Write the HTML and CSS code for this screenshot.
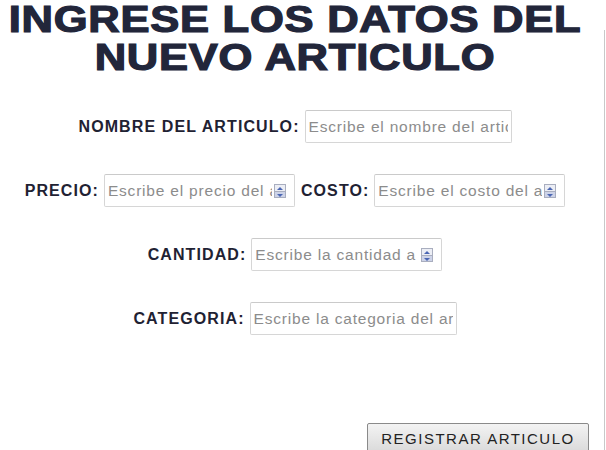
FILE: index.html
```html
<!DOCTYPE html>
<html lang="es">
<head>
<meta charset="utf-8">
<title>Nuevo articulo</title>
<link rel="stylesheet" href="styles.css">
</head>
<body>
<div class="screen">
<div class="page">
  <h1 class="title"><span class="title-line">INGRESE LOS DATOS DEL</span><span class="title-line">NUEVO ARTICULO</span></h1>
  <form class="form">
    <div class="row">
      <label class="label">NOMBRE DEL ARTICULO:</label>
      <span class="field field-text"><input class="input" type="text" placeholder="Escribe el nombre del articulo"></span>
    </div>
    <div class="row">
      <label class="label">PRECIO:</label>
      <span class="field field-num"><input class="input" type="text" placeholder="Escribe el precio del articulo"><span class="spin"><span class="spin-up"></span><span class="spin-down"></span></span></span>
      <label class="label">COSTO:</label>
      <span class="field field-num"><input class="input" type="text" placeholder="Escribe el costo del articulo"><span class="spin"><span class="spin-up"></span><span class="spin-down"></span></span></span>
    </div>
    <div class="row">
      <label class="label">CANTIDAD:</label>
      <span class="field field-num"><input class="input" type="text" placeholder="Escribe la cantidad a registrar"><span class="spin"><span class="spin-up"></span><span class="spin-down"></span></span></span>
    </div>
    <div class="row">
      <label class="label">CATEGORIA:</label>
      <span class="field field-text"><input class="input" type="text" placeholder="Escribe la categoria del articulo"></span>
    </div>
    <div class="actions">
      <button class="button" type="button">REGISTRAR ARTICULO</button>
    </div>
  </form>
</div>
</div>
</body>
</html>
```
FILE: styles.css
```css
html, body {
  margin: 0;
  padding: 0;
  background: #ffffff;
}
body {
  font-family: "Liberation Sans", Arial, sans-serif;
  color: #1f2233;
}
.screen {
  position: relative;
  width: 606px;
  height: 450px;
  overflow: hidden;
}
.screen::after {
  content: "";
  position: absolute;
  right: 1px;
  top: 30px;
  bottom: 0;
  width: 1px;
  background: #c8c8c8;
}
.page {
  width: 590px;
}
.title {
  margin: 0;
  padding-top: 1px;
  font-size: 36px;
  line-height: 38px;
  font-weight: bold;
  text-align: center;
  color: #22263a;
}
.title-line {
  display: block;
  transform: scaleX(1.21);
  letter-spacing: 0.6px;
  -webkit-text-stroke: 1.2px #22263a;
}
.form {
  display: flex;
  flex-direction: column;
  align-items: center;
  padding-top: 33px;
}
.row {
  display: flex;
  align-items: center;
  justify-content: center;
  gap: 6px;
  height: 33px;
  margin-bottom: 31px;
}
.label {
  font-size: 16px;
  font-weight: bold;
  letter-spacing: 1.1px;
  margin-right: -1.1px;
  color: #1f2233;
}
.field {
  position: relative;
  display: inline-block;
  height: 33px;
}
.field-text { width: 207px; }
.field-num { width: 191px; }
.input {
  box-sizing: border-box;
  width: 100%;
  height: 33px;
  border: 1px solid #d6d6d6;
  border-top-color: #cacaca;
  border-radius: 2px;
  padding: 0 3px;
  font-family: "Liberation Sans", Arial, sans-serif;
  font-size: 15.5px;
  letter-spacing: 0.8px;
  color: #333;
  background: #fff;
  outline: none;
}
.field-num .input { padding-right: 22px; }
.input::placeholder { color: #8c8c8c; }
.spin {
  position: absolute;
  right: 9px;
  top: 10px;
  width: 12px;
  height: 14px;
  display: flex;
  flex-direction: column;
  border: 1px solid #a9aebf;
  box-sizing: border-box;
}
.spin-up, .spin-down {
  flex: 1;
  position: relative;
}
.spin-up {
  background: #eceef5;
  border-bottom: 1px solid #a9aebf;
}
.spin-down { background: #cdd3e8; }
.spin-up::after, .spin-down::after {
  content: "";
  position: absolute;
  left: 2px;
  width: 0;
  height: 0;
  border-left: 3px solid transparent;
  border-right: 3px solid transparent;
}
.spin-up::after { top: 2px; border-bottom: 3px solid #4b66b3; }
.spin-down::after { top: 2px; border-top: 3px solid #4b66b3; }
.actions {
  align-self: stretch;
  display: flex;
  justify-content: flex-end;
  padding-right: 1px;
  padding-top: 57px;
}
.button {
  width: 222px;
  height: 30px;
  border: 1px solid #8a8a8a;
  border-radius: 2px;
  background: linear-gradient(#f3f3f3, #dadada);
  font-family: "Liberation Sans", Arial, sans-serif;
  font-size: 15px;
  letter-spacing: 1.5px;
  color: #222;
  padding: 0;
}
```
